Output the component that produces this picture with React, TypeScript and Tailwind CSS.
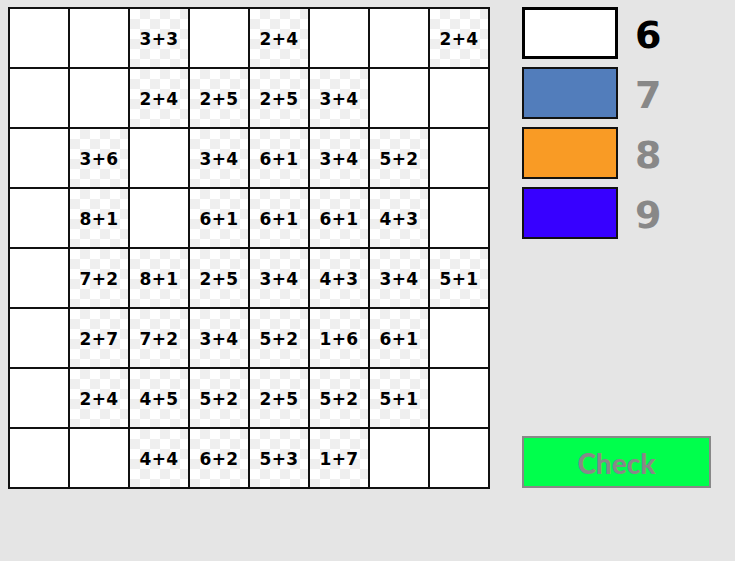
const rows: string[][] = [
  ["", "", "3+3", "", "2+4", "", "", "2+4"],
  ["", "", "2+4", "2+5", "2+5", "3+4", "", ""],
  ["", "3+6", "", "3+4", "6+1", "3+4", "5+2", ""],
  ["", "8+1", "", "6+1", "6+1", "6+1", "4+3", ""],
  ["", "7+2", "8+1", "2+5", "3+4", "4+3", "3+4", "5+1"],
  ["", "2+7", "7+2", "3+4", "5+2", "1+6", "6+1", ""],
  ["", "2+4", "4+5", "5+2", "2+5", "5+2", "5+1", ""],
  ["", "", "4+4", "6+2", "5+3", "1+7", "", ""],
]

const legend = [
  { n: "6", box: "bg-white border-[3px] border-black", text: "text-black" },
  { n: "7", box: "bg-[#527dbb] border-2 border-[#111]", text: "text-[#888]" },
  { n: "8", box: "bg-[#f99b25] border-2 border-[#111]", text: "text-[#888]" },
  { n: "9", box: "bg-[#3700ff] border-2 border-[#111]", text: "text-[#888]" },
]

function Cell({ label }: { label: string }) {
  if (!label) return <div className="h-[58px] w-[58px] bg-white" />
  return (
    <div className="flex h-[58px] w-[58px] items-center justify-center bg-white bg-[conic-gradient(#efefef_25%,#ffffff_0_50%,#efefef_0_75%,#ffffff_0)] bg-[length:20px_20px] pt-[4px] text-[17px] font-extrabold tracking-wide text-black">
      {label}
    </div>
  )
}

export default function App() {
  return (
    <div className="flex h-[561px] w-[735px] bg-[#e5e5e5] font-['DejaVu_Sans',sans-serif]">
      <div className="ml-[8px] mt-[7px] self-start">
        <div className="grid grid-cols-8 gap-[2px] bg-[#111] p-[2px]">
          {rows.flat().map((c, i) => (
            <Cell key={i} label={c} />
          ))}
        </div>
      </div>

      <div className="ml-[32px] mt-[7px] flex w-[190px] flex-col">
        {legend.map((l, i) => (
          <div key={i} className="mb-[8px] flex h-[52px] items-center">
            <div className={`h-[52px] w-[96px] ${l.box}`} />
            <span className={`ml-[17px] pt-[4px] text-[38px] font-extrabold leading-none ${l.text}`}>
              {l.n}
            </span>
          </div>
        ))}
        <button className="mt-[189px] flex h-[52px] w-[189px] items-center justify-center border-2 border-[#888] bg-[#00ff4c] pt-[2px] font-['Lato',sans-serif] text-[28px] font-black text-[#888]">
          Check
        </button>
      </div>
    </div>
  )
}
